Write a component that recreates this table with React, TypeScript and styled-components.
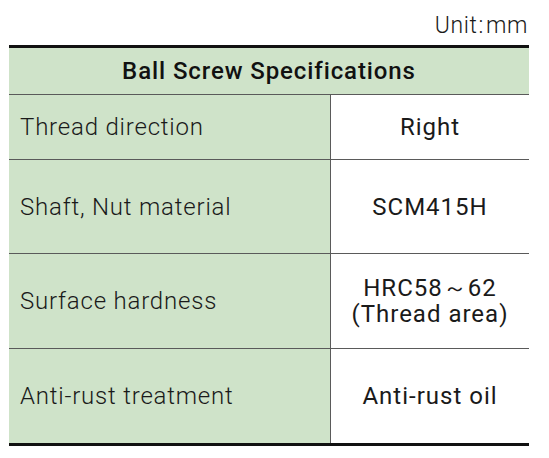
import React from "react";
import styled, { createGlobalStyle } from "styled-components";

const GlobalStyle = createGlobalStyle`
  html, body { margin: 0; padding: 0; background: #ffffff; }
  body { font-family: Roboto, "Noto Sans", "Liberation Sans", sans-serif; }
`;

const Page = styled.div`
  width: 520px;
  padding-left: 9px;
`;

const UnitRow = styled.div`
  height: 45px;
  display: flex;
  justify-content: flex-end;
  align-items: center;
  padding-top: 5px;
  padding-right: 1px;
  box-sizing: border-box;
  font-size: 23px;
  font-weight: 300;
  color: #1a1a1a;
  letter-spacing: 0.6px;
`;

const Colon = styled.span`
  margin: 0 2px 0 1px;
`;

const Table = styled.div`
  display: grid;
  grid-template-columns: 322px 1fr;
  border-top: 3px solid #111111;
  border-bottom: 3px solid #111111;
`;

const Header = styled.div`
  grid-column: 1 / span 2;
  height: 46px;
  background: #cfe3c9;
  border-bottom: 1px solid #5a5a5a;
  display: flex;
  align-items: center;
  justify-content: center;
  font-size: 24px;
  font-weight: 500;
  color: #111111;
  letter-spacing: 0.9px;
`;

const Label = styled.div<{ $h: number; $last?: boolean }>`
  height: ${(p) => p.$h}px;
  background: #cfe3c9;
  border-right: 1px solid #5a5a5a;
  border-bottom: ${(p) => (p.$last ? "none" : "1px solid #5a5a5a")};
  display: flex;
  align-items: center;
  padding-left: 11px;
  font-size: 24px;
  font-weight: 300;
  color: #1a1a1a;
  letter-spacing: 0.8px;
`;

const Value = styled.div<{ $h: number; $last?: boolean }>`
  height: ${(p) => p.$h}px;
  background: #ffffff;
  border-bottom: ${(p) => (p.$last ? "none" : "1px solid #5a5a5a")};
  display: flex;
  flex-direction: column;
  align-items: center;
  justify-content: center;
  text-align: center;
  font-size: 24px;
  line-height: 26px;
  color: #1a1a1a;
  letter-spacing: 1px;
`;

const rows: { label: string; value: string[]; h: number }[] = [
  { label: "Thread direction", value: ["Right"], h: 64 },
  { label: "Shaft, Nut material", value: ["SCM415H"], h: 93 },
  { label: "Surface hardness", value: ["HRC58～62", "(Thread area)"], h: 94 },
  { label: "Anti-rust treatment", value: ["Anti-rust oil"], h: 94 },
];

export default function App() {
  return (
    <>
      <GlobalStyle />
      <Page>
        <UnitRow>
          Unit<Colon>:</Colon>mm
        </UnitRow>
        <Table>
          <Header>Ball Screw Specifications</Header>
          {rows.map((r, i) => {
            const last = i === rows.length - 1;
            return (
              <React.Fragment key={r.label}>
                <Label $h={r.h} $last={last}>{r.label}</Label>
                <Value $h={r.h} $last={last}>
                  {r.value.map((v) => (
                    <span key={v}>{v}</span>
                  ))}
                </Value>
              </React.Fragment>
            );
          })}
        </Table>
      </Page>
    </>
  );
}
